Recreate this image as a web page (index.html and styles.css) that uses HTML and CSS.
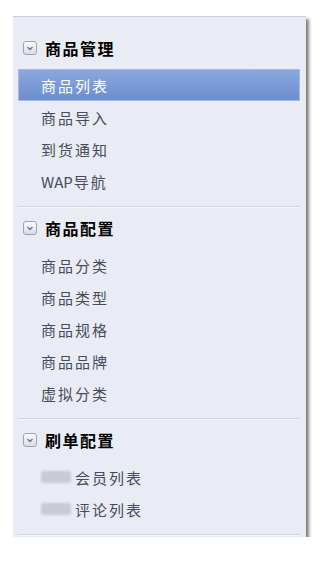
FILE: index.html
```html
<!DOCTYPE html>
<html lang="zh-CN">
<head>
<meta charset="utf-8">
<title>菜单</title>
<link rel="stylesheet" href="styles.css">
</head>
<body>
<div class="page">
  <nav class="panel">
    <section class="section first">
      <div class="head">
        <span class="toggle"><svg width="14" height="14" viewBox="0 0 14 14"><defs><linearGradient id="g1" x1="0" y1="0" x2="0" y2="1"><stop offset="0" stop-color="#ffffff"/><stop offset="1" stop-color="#d6dae4"/></linearGradient></defs><rect x="0.5" y="0.5" width="13" height="13" rx="2.5" fill="url(#g1)" stroke="#9ca2b0"/><path d="M4.5 6 L7 8.5 L9.5 6" fill="none" stroke="#6a7282" stroke-width="1.3"/></svg></span>
        <span class="title">商品管理</span>
      </div>
      <ul class="items">
        <li class="item active">商品列表</li>
        <li class="item">商品导入</li>
        <li class="item">到货通知</li>
        <li class="item"><span class="latin">WAP</span>导航</li>
      </ul>
    </section>
    <section class="section">
      <div class="head">
        <span class="toggle"><svg width="14" height="14" viewBox="0 0 14 14"><rect x="0.5" y="0.5" width="13" height="13" rx="2.5" fill="url(#g1)" stroke="#9ca2b0"/><path d="M4.5 6 L7 8.5 L9.5 6" fill="none" stroke="#6a7282" stroke-width="1.3"/></svg></span>
        <span class="title">商品配置</span>
      </div>
      <ul class="items">
        <li class="item">商品分类</li>
        <li class="item">商品类型</li>
        <li class="item">商品规格</li>
        <li class="item">商品品牌</li>
        <li class="item">虚拟分类</li>
      </ul>
    </section>
    <section class="section">
      <div class="head">
        <span class="toggle"><svg width="14" height="14" viewBox="0 0 14 14"><rect x="0.5" y="0.5" width="13" height="13" rx="2.5" fill="url(#g1)" stroke="#9ca2b0"/><path d="M4.5 6 L7 8.5 L9.5 6" fill="none" stroke="#6a7282" stroke-width="1.3"/></svg></span>
        <span class="title">刷单配置</span>
      </div>
      <ul class="items">
        <li class="item"><span class="blur"></span>会员列表</li>
        <li class="item"><span class="blur"></span>评论列表</li>
      </ul>
    </section>
  </nav>
</div>
</body>
</html>
```

FILE: styles.css
```css
html, body {
  margin: 0;
  padding: 0;
  background: #ffffff;
}
body {
  font-family: "Noto Sans CJK SC", "Liberation Sans", sans-serif;
}
.page {
  padding: 16px 0 0 13px;
}
.panel {
  width: 293px;
  background: #e9ecf4;
  border-top: 1px solid #c8ccd6;
  box-shadow: 3px 3px 3px rgba(60, 60, 60, 0.65);
  padding: 10px 0 2px 0;
  box-sizing: border-box;
}
.section {
  margin: 0 6px 0 5px;
  padding: 7px 0 9px 0;
  border-bottom: 1px solid #cdd6e8;
  box-shadow: 0 1px 0 #f4f6fa;
}
.head {
  display: flex;
  align-items: center;
  height: 28px;
  padding-left: 5px;
}
.toggle {
  display: flex;
  width: 14px;
  height: 14px;
  margin-right: 8px;
}
.title {
  font-size: 16px;
  font-weight: bold;
  letter-spacing: 1.5px;
  color: #000000;
}
.items {
  list-style: none;
  margin: 7px 0 0 0;
  padding: 0;
}
.item {
  display: flex;
  align-items: center;
  height: 32px;
  padding-left: 23px;
  font-size: 15px;
  letter-spacing: 2px;
  color: #444c5e;
  box-sizing: border-box;
}
.latin {
  letter-spacing: 0;
  margin-right: 1px;
}
.item.active {
  color: #ffffff;
  background: linear-gradient(#8ba8dd, #6c8dcf);
  border: 1px solid #a5b9e3;
  padding-left: 22px;
}
.blur {
  display: inline-block;
  width: 30px;
  height: 12px;
  margin-right: 4px;
  background: #c6cbd6;
  border-radius: 2px;
  filter: blur(1px);
}
```
